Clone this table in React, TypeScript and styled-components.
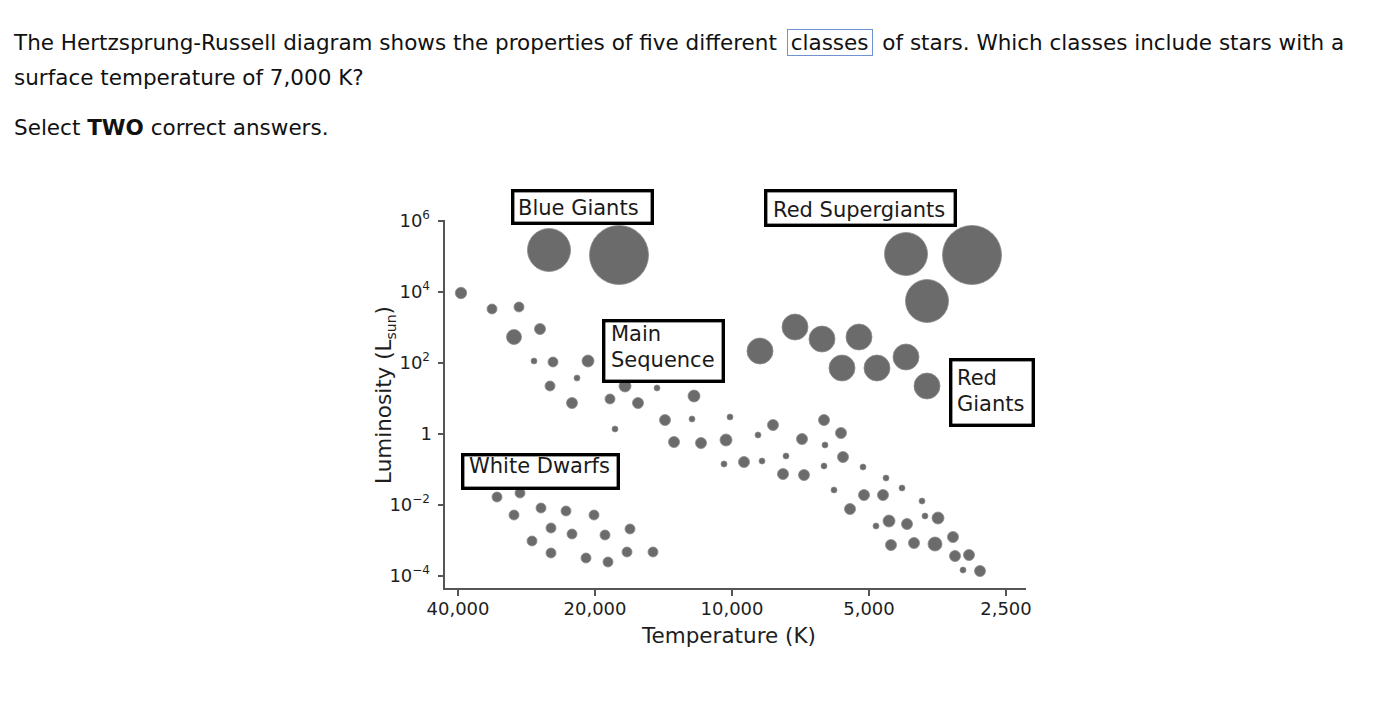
import styled, { createGlobalStyle } from "styled-components";

const GlobalStyle = createGlobalStyle`
  html, body {
    margin: 0;
    padding: 0;
    background: #ffffff;
  }
  body {
    font-family: "DejaVu Sans", Verdana, sans-serif;
    color: #111111;
  }
`;

const Page = styled.main`
  padding: 25px 14px 40px;
`;

const Question = styled.p`
  margin: 0 0 15px;
  font-size: 21.5px;
  line-height: 35px;
  max-width: 1365px;
`;

const Term = styled.span`
  border: 1px solid #6f93cf;
  padding: 0 3px;
  margin: 0 3px;
`;

const Figure = styled.figure`
  margin: 35px 0 0;
  display: flex;
  justify-content: center;
`;

const Chart = styled.svg`
  display: block;
  width: 680px;
  height: 480px;
  font-family: "DejaVu Sans", Verdana, sans-serif;
`;

const Axis = styled.line`
  stroke: #555555;
  stroke-width: 2;
`;

const TickLabel = styled.text<{ $anchor?: string }>`
  font-size: 18px;
  fill: #1e1e1e;
  text-anchor: ${(p) => p.$anchor ?? "middle"};
`;

const AxisTitle = styled.text`
  font-size: 21.5px;
  fill: #1e1e1e;
  text-anchor: middle;
`;

const Dot = styled.circle`
  fill: #6b6b6b;
  stroke: #8c8c8c;
  stroke-width: 0.8;
`;

const LabelBox = styled.rect`
  fill: #ffffff;
  stroke: #000000;
  stroke-width: 3.4;
`;

const LabelText = styled.text`
  font-size: 21px;
  fill: #1a1a1a;
`;

type Star = [number, number, number];

const stars: Star[] = [
  // blue giants
  [548, 250, 21.5],
  [618, 255, 29.5],
  // red supergiants
  [905, 254, 21.5],
  [971, 255, 29.5],
  [926, 301, 21.5],
  // red giants
  [759, 351, 13],
  [794, 327, 13],
  [821, 339, 13],
  [858, 337, 13],
  [841, 368, 13],
  [876, 368, 13],
  [905, 357, 13],
  [926, 386, 13],
  // main sequence
  [460, 293, 5.7],
  [491, 309, 5],
  [518, 307, 5],
  [513, 337, 7.5],
  [539, 329, 5.5],
  [533, 361, 3],
  [552, 362, 5],
  [587, 361, 6],
  [549, 386, 5],
  [576, 378, 3],
  [624, 386, 6],
  [571, 403, 5.5],
  [609, 399, 5],
  [637, 403, 5.5],
  [656, 388, 3],
  [693, 396, 6],
  [614, 429, 3],
  [664, 420, 5.5],
  [691, 419, 3],
  [729, 417, 3],
  [673, 442, 5.5],
  [700, 443, 5.5],
  [725, 440, 6],
  [757, 435, 3],
  [772, 425, 5.5],
  [801, 439, 5.5],
  [823, 420, 5.5],
  [824, 445, 3],
  [723, 464, 3],
  [743, 462, 5.5],
  [761, 461, 3],
  [785, 456, 3],
  [782, 474, 5.5],
  [803, 475, 5.5],
  [823, 466, 3],
  [840, 433, 5.5],
  [842, 457, 5.5],
  [833, 490, 3],
  [862, 467, 3],
  [863, 495, 5.5],
  [849, 509, 5.5],
  [885, 478, 3],
  [882, 495, 5.5],
  [901, 488, 3],
  [921, 501, 3],
  [875, 526, 3],
  [888, 521, 6],
  [906, 524, 5.5],
  [924, 516, 3],
  [937, 518, 6],
  [890, 545, 5.5],
  [913, 543, 5.5],
  [934, 544, 7],
  [952, 537, 5.5],
  [954, 556, 5.5],
  [968, 555, 5.5],
  [962, 570, 3],
  [979, 571, 5.5],
  // white dwarfs
  [496, 497, 5],
  [519, 493, 5],
  [513, 515, 5],
  [540, 508, 5],
  [565, 511, 5],
  [593, 515, 5],
  [550, 528, 5],
  [571, 534, 5],
  [604, 535, 5],
  [629, 529, 5],
  [531, 541, 5],
  [550, 553, 5],
  [585, 558, 5],
  [607, 562, 5],
  [626, 552, 5],
  [652, 552, 5],
];

// outer edges of each label box: left, top, right, bottom
const labels = [
  { box: [510, 189, 653, 225], lines: ["Blue Giants"], x: 517, y: 215 },
  { box: [763, 189, 956, 227], lines: ["Red Supergiants"], x: 772, y: 217 },
  { box: [601, 319, 724, 383], lines: ["Main", "Sequence"], x: 610, y: 341 },
  { box: [948, 358, 1034, 427], lines: ["Red", "Giants"], x: 956, y: 385 },
  { box: [460, 453, 619, 490], lines: ["White Dwarfs"], x: 468, y: 473 },
];

const yTicks = [
  { y: 221, base: "10", exp: "6" },
  { y: 292, base: "10", exp: "4" },
  { y: 363, base: "10", exp: "2" },
  { y: 434, base: "1", exp: "" },
  { y: 505, base: "10", exp: "\u22122" },
  { y: 576, base: "10", exp: "\u22124" },
];

const xTicks = [
  { x: 457, label: "40,000" },
  { x: 594, label: "20,000" },
  { x: 731, label: "10,000" },
  { x: 868, label: "5,000" },
  { x: 1005, label: "2,500" },
];

function HRDiagram() {
  return (
    <Chart viewBox="356 180 680 480">
      <Axis x1={443} y1={220} x2={443} y2={590} />
      <Axis x1={442} y1={589} x2={1025} y2={589} />
      {yTicks.map((t) => (
        <g key={t.y}>
          <Axis x1={437} y1={t.y} x2={443} y2={t.y} />
          <TickLabel $anchor="end" x={t.exp ? 429 : 431} y={t.y + 6}>
            {t.base}
            {t.exp && (
              <tspan fontSize={12} dy={-8}>
                {t.exp}
              </tspan>
            )}
          </TickLabel>
        </g>
      ))}
      {xTicks.map((t) => (
        <g key={t.x}>
          <Axis x1={t.x} y1={589} x2={t.x} y2={596} />
          <TickLabel x={t.x} y={615}>
            {t.label}
          </TickLabel>
        </g>
      ))}
      <AxisTitle x={728} y={643}>
        Temperature (K)
      </AxisTitle>
      <AxisTitle x={390} y={395} transform="rotate(-90 390 395)">
        Luminosity (L
        <tspan fontSize={14} dy={5}>
          sun
        </tspan>
        <tspan dy={-5}>)</tspan>
      </AxisTitle>

      {stars.map(([cx, cy, r], i) => (
        <Dot key={i} cx={cx} cy={cy} r={r} />
      ))}

      {labels.map((l) => {
        const [x1, y1, x2, y2] = l.box;
        return (
          <g key={l.lines.join(" ")}>
            <LabelBox
              x={x1 + 1.7}
              y={y1 + 1.7}
              width={x2 - x1 - 3.4}
              height={y2 - y1 - 3.4}
            />
            {l.lines.map((line, i) => (
              <LabelText key={line} x={l.x} y={l.y + i * 26}>
                {line}
              </LabelText>
            ))}
          </g>
        );
      })}
    </Chart>
  );
}

export default function App() {
  return (
    <>
      <GlobalStyle />
      <Page>
        <Question>
          The Hertzsprung-Russell diagram shows the properties of five different{" "}
          <Term>classes</Term> of stars. Which classes include stars with a
          surface temperature of 7,000 K?
        </Question>
        <Question>
          Select <b>TWO</b> correct answers.
        </Question>
        <Figure>
          <HRDiagram />
        </Figure>
      </Page>
    </>
  );
}
